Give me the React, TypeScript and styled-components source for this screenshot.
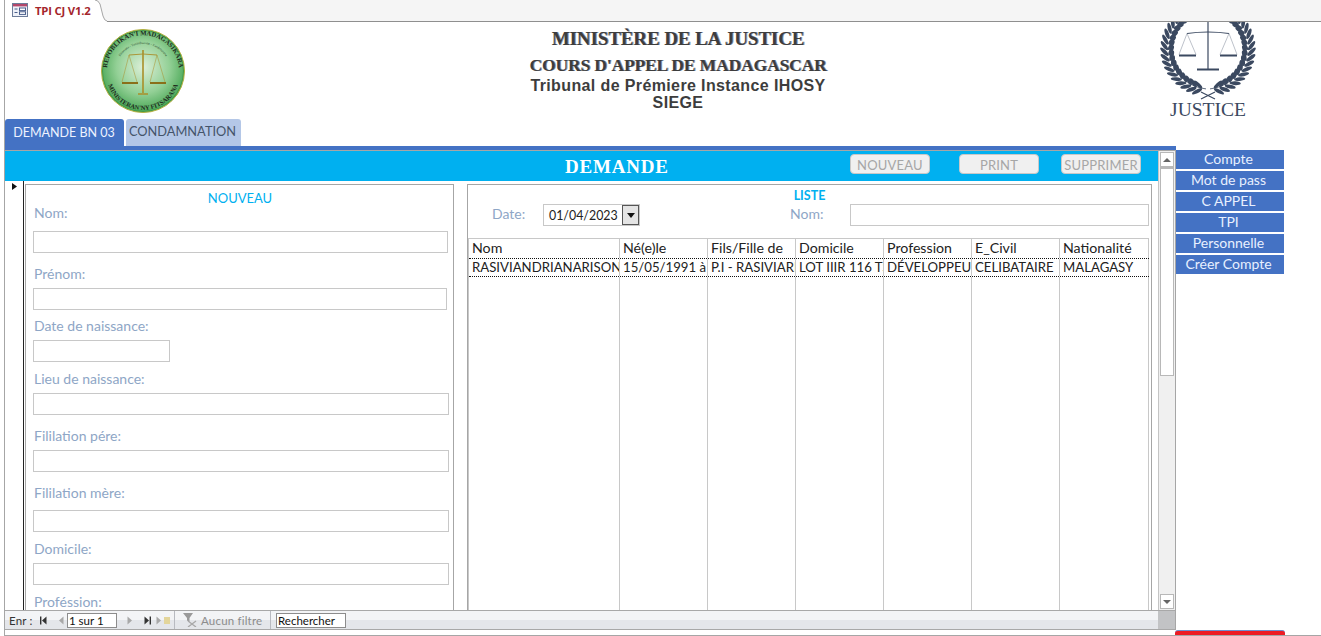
import React from "react";
import styled, { createGlobalStyle } from "styled-components";

const Global = createGlobalStyle`
  html, body { margin: 0; padding: 0; background: #fff; overflow: hidden; }
  * { box-sizing: border-box; }
`;

const UI = `"Lato", "Open Sans", "Liberation Sans", sans-serif`;

const Page = styled.div`
  width: 1321px; height: 636px; overflow: hidden; display: flex; flex-direction: column;
  padding-left: 4px; background: #fff; font-family: ${UI};
`;
const Inner = styled.div`
  flex: 1; display: flex; flex-direction: column; border-left: 1px solid #a6a6a6; min-height: 0;
`;
const DocBar = styled.div`
  height: 22px; flex: none; display: flex; background: #f5f5f5; border-bottom: 1px solid #8f8f8f;
`;
const DocTab = styled.div`
  width: 87px; height: 22px; flex: none; display: flex; align-items: center; gap: 7px; padding: 0 0 2px 7px;
  background: #fff; font: bold 11.3px "Open Sans", sans-serif; color: #a4262c; letter-spacing: -0.2px; white-space: nowrap;
`;
const TabTail = styled.svg`width: 15px; height: 22px; flex: none;`;

const Header = styled.header`
  height: 97px; flex: none; display: flex; overflow: hidden;
`;
const SealCell = styled.div`width: 453px; padding: 7px 0 0 96px; flex: none;`;
const TitleCell = styled.div`
  width: 440px; flex: none; text-align: center; color: #3d3d3d; padding-top: 5px;
`;
const Title1 = styled.div`
  font: bold 19px/24px "Liberation Serif", serif; letter-spacing: -0.1px;
  text-shadow: 1px 0 0 #8a8fa0;
`;
const Title2 = styled.div`
  font: bold 17.5px/24px "Liberation Serif", serif; letter-spacing: -0.15px; margin-top: 2px; margin-bottom: 0;
  text-shadow: 1px 0 0 #8a8fa0;
`;
const Title3 = styled.div`
  font: bold 16px/17px "Liberation Sans", sans-serif; letter-spacing: 0.38px;
`;
const WreathCell = styled.div`margin-left: 257px; width: 106px; flex: none;`;

const TabRow = styled.div`
  height: 27px; flex: none; display: flex; gap: 2px; align-items: stretch;
`;
const TabItem = styled.div<{ $active?: boolean; $w: number }>`
  width: ${(p) => p.$w}px; display: flex; align-items: center; justify-content: center;
  border-radius: 3px 3px 0 0; font-size: ${(p) => (p.$active ? 12.5 : 12.8)}px;
  padding-bottom: ${(p) => (p.$active ? 1 : 4)}px;
  padding-right: ${(p) => (p.$active ? 1 : 2)}px;
  background: ${(p) => (p.$active ? "#4472c4" : "#b4c7e7")};
  color: ${(p) => (p.$active ? "#eef3ff" : "#44546a")};
`;
const BlueLine = styled.div`height: 4px; width: 1171px; flex: none; background: #4472c4;`;

const Main = styled.div`flex: none; height: 480px; display: flex;`;
const FormWindow = styled.div`
  width: 1171px; flex: none; display: flex; flex-direction: column; border-right: 1px solid #a6a6a6;
`;
const ScrollRow = styled.div`flex: 1; display: flex; min-height: 0; border-top: 1px solid #a6a6a6;`;
const Content = styled.div`width: 1153px; flex: none; display: flex; flex-direction: column;`;
const Banner = styled.div`
  height: 30px; flex: none; background: #00b0f0; display: flex; align-items: center; padding-left: 560px;
`;
const BannerTitle = styled.div`
  width: 285px; font: bold 19px/30px "Liberation Serif", serif; color: #fff; letter-spacing: 0.8px; padding-top: 2px;
`;
const GhostButton = styled.div<{ $gap: number }>`
  width: 80px; height: 20px; margin-left: ${(p) => p.$gap}px; margin-top: -4px; padding-top: 1px;
  display: flex; align-items: center; justify-content: center;
  background: #f0f0f0; border: 1px solid #c8c8c8; border-radius: 4px;
  color: #a6a6a6; font-size: 13px; letter-spacing: 0.2px;
`;
const Body = styled.div`flex: 1; display: flex; min-height: 0;`;
const Selector = styled.div`
  width: 19px; flex: none; border-right: 1px solid #222; display: flex; justify-content: center; padding-top: 2px;
`;
const LeftPanel = styled.section`
  width: 429px; margin: 3px 0 0 1px; flex: none; overflow: hidden;
  border: 1px solid #a6a6a6; border-bottom: 0; padding: 6px 0 0 7px;
`;
const PanelTitle = styled.div`
  font-size: 13px; line-height: 14px; color: #00b0f0; text-align: center; padding-right: 6px;
`;
const FieldLabel = styled.div<{ $gap: number; $after: number }>`
  font-size: 14px; line-height: 16px; color: #8ea6c6; padding-left: 1px;
  margin-top: ${(p) => p.$gap}px; margin-bottom: ${(p) => p.$after}px;
`;
const Input = styled.div<{ $w: number }>`
  width: ${(p) => p.$w}px; height: 22px; flex: none; background: #fff; border: 1px solid #c8c8c8;
`;
const RightPanel = styled.section`
  width: 685px; margin: 3px 0 0 13px; flex: none; display: flex; flex-direction: column;
  border: 1px solid #a6a6a6; border-bottom: 0; padding-top: 5px; min-height: 0;
`;
const ListTitle = styled.div`
  font: bold 12.5px/12px ${UI}; color: #00b0f0; text-align: center;
`;
const Filters = styled.div`
  display: flex; align-items: center; height: 22px; margin-top: 2px; padding-left: 24px;
`;
const FilterLabel = styled.div<{ $w: number }>`
  width: ${(p) => p.$w}px; font-size: 14px; color: #8ea6c6; margin-top: -3px;
`;
const DateBox = styled.div`
  width: 97px; height: 22px; border: 1px solid #c8c8c8; display: flex; align-items: center;
  justify-content: space-between; padding: 0 0 0 5px; font-size: 12.4px; color: #222;
`;
const DropButton = styled.div`
  width: 17px; height: 20px; border: 1px solid #555; background: #e4e4e4;
  display: flex; align-items: center; justify-content: center;
  &::after { content: ""; border: 4px solid transparent; border-top: 5px solid #111; border-bottom: 0; }
`;
const FilterGap = styled.div`width: 150px; flex: none;`;
const Table = styled.div`
  flex: 1; margin: 12px 0 0 0; display: flex; flex-direction: column; min-height: 0; width: 681px;
  border-top: 1px solid #c8c8c8; border-left: 1px solid #c8c8c8;
`;
const Row = styled.div<{ $fill?: boolean; $current?: boolean }>`
  display: grid; grid-template-columns: 151px repeat(5, 88px) 89px;
  height: ${(p) => (p.$fill ? "auto" : "19px")}; flex: ${(p) => (p.$fill ? 1 : "none")};
  border-top: ${(p) => (p.$current ? "1px dotted #111" : "0")};
  border-bottom: ${(p) => (p.$current ? "1px dotted #111" : "0")};
`;
const Cell = styled.div<{ $head?: boolean }>`
  border-right: 1px solid #c8c8c8; padding-left: 3px; font-size: ${(p) => (p.$head ? 14.2 : 13.2)}px;
  line-height: ${(p) => (p.$head ? 18 : 16)}px; color: #222;
  white-space: nowrap; overflow: hidden;
`;
const Scrollbar = styled.div`
  width: 17px; flex: none; background: #f0f0f0; border-left: 1px solid #c4c4c4; display: flex; flex-direction: column;
  padding: 1px 1px; 
`;
const ScrollButton = styled.div<{ $down?: boolean }>`
  height: 15px; flex: none; background: #fff; border: 1px solid #b8b8b8; display: flex; align-items: center; justify-content: center;
  &::after {
    content: ""; border: 4px solid transparent;
    ${(p) => (p.$down ? "border-top: 4px solid #666; border-bottom: 0;" : "border-bottom: 4px solid #666; border-top: 0;")}
  }
`;
const ScrollThumb = styled.div`height: 209px; flex: none; background: #fff; border: 1px solid #b8b8b8; border-top: 2px solid #b8b8b8;`;
const ScrollTrack = styled.div`flex: 1;`;

const NavRow = styled.div`height: 20px; flex: none; display: flex; border-top: 1px solid #a8a8a8; border-bottom: 1px solid #a8a8a8;`;
const Nav = styled.div`
  width: 1153px; flex: none; display: flex; align-items: center; padding-left: 4px;
  background: linear-gradient(#f3f4f6 50%, #e4e6ea 50%); font-size: 11.5px; color: #333;
`;
const Corner = styled.div`flex: 1; background: #c2c3c5;`;
const NavText = styled.span<{ $w: number }>`width: ${(p) => p.$w}px; flex: none; white-space: nowrap; letter-spacing: 0.2px;`;
const NavIcon = styled.svg<{ $ml: number }>`flex: none; width: 8px; height: 9px; margin-left: ${(p) => p.$ml}px;`;
const NavInput = styled.div<{ $w: number; $ml: number }>`
  width: ${(p) => p.$w}px; margin-left: ${(p) => p.$ml}px; height: 15px; flex: none; background: #fff; border: 1px solid #8c8c8c;
  font-size: 11.5px; line-height: 13px; padding-left: 1px; color: #111;
`;
const NavSep = styled.div<{ $ml: number }>`width: 1px; height: 18px; flex: none; background: #b8bac0; margin-left: ${(p) => p.$ml}px;`;
const FilterIcon = styled.svg`width: 15px; height: 14px; margin-left: 8px; flex: none;`;
const FilterText = styled.span`color: #8c8c8c; margin-left: 3px; width: 69px; flex: none; letter-spacing: 0.2px; white-space: nowrap;`;

const Sidebar = styled.nav`width: 108px; flex: none; display: flex; flex-direction: column; gap: 2px;`;
const SideButton = styled.div`
  height: 19px; background: #4472c4; color: #e8f0ff; font-size: 14px; line-height: 18px; text-align: center; padding-right: 3px;
`;
const Footer = styled.div`
  flex: 1; display: flex; border-bottom: 1px solid #a6a6a6; padding-left: 1170px;
`;
const RedButton = styled.div`
  width: 110px; height: 5px; background: #ed1c24; border-top: 1px solid #6f8fd0; border-radius: 3px 3px 0 0;
`;

const fields = [
  { label: "Nom:", gap: 0, after: 10, w: 415 },
  { label: "Prénom:", gap: 13, after: 6, w: 414 },
  { label: "Date de naissance:", gap: 8, after: 6, w: 137 },
  { label: "Lieu de naissance:", gap: 9, after: 6, w: 416 },
  { label: "Fililation pére:", gap: 13, after: 6, w: 416 },
  { label: "Fililation mère:", gap: 13, after: 9, w: 416 },
  { label: "Domicile:", gap: 9, after: 6, w: 416 },
  { label: "Proféssion:", gap: 9, after: 6, w: 416 },
];
const heads = ["Nom", "Né(e)le", "Fils/Fille de", "Domicile", "Profession", "E_Civil", "Nationalité"];
const record = ["RASIVIANDRIANARISON", "15/05/1991 à Ihosy", "P.I - RASIVIARISOA", "LOT IIIR 116 TSIANALOKA", "DÉVELOPPEUR", "CELIBATAIRE", "MALAGASY"];

const FormIcon = () => (
  <svg width="16" height="14" viewBox="0 0 16 14">
    <rect x="0.5" y="0.5" width="15" height="13" fill="#eef1f8" stroke="#6d7c99" />
    <rect x="1" y="1" width="14" height="2.4" fill="#b3476a" />
    <path d="M2.5 6h3M2.5 9.5h3" stroke="#4a5f8c" />
    <rect x="7.5" y="5" width="6" height="2.6" fill="#fff" stroke="#4a5f8c" />
    <rect x="7.5" y="8.8" width="6" height="2.6" fill="#fff" stroke="#4a5f8c" />
  </svg>
);

const Seal = () => (
  <svg width="84" height="84" viewBox="0 0 84 84">
    <defs>
      <radialGradient id="g" cx="50%" cy="45%" r="55%">
        <stop offset="0%" stopColor="#dcefd8" />
        <stop offset="60%" stopColor="#93d096" />
        <stop offset="100%" stopColor="#4ca858" />
      </radialGradient>
      <path id="arcTop" d="M8 54 A36 36 0 1 1 76 54" />
      <path id="arcIn" d="M15 42 A27 27 0 0 1 69 42" />
      <path id="arcBot" d="M5.5 50 A37 37 0 0 0 78.5 50" />
    </defs>
    <circle cx="42" cy="42" r="41.5" fill="#3f9a4c" stroke="#b5b040" strokeWidth="1" />
    <circle cx="42" cy="42" r="40" fill="url(#g)" />
    <text fontFamily="Liberation Serif, serif" fontSize="6.6" fontWeight="bold" fill="#1d2a1c">
      <textPath href="#arcTop" startOffset="50%" textAnchor="middle">REPOBLIKAN'I MADAGASIKARA</textPath>
    </text>
    <text fontFamily="Liberation Serif, serif" fontSize="3.4" fill="#2c4a2c">
      <textPath href="#arcIn" startOffset="50%" textAnchor="middle">Fitiavana - Tanindrazana - Fandrosoana</textPath>
    </text>
    <text fontFamily="Liberation Serif, serif" fontSize="6.4" fontWeight="bold" fill="#1d2a1c">
      <textPath href="#arcBot" startOffset="50%" textAnchor="middle">MINISTERAN'NY FITSARANA</textPath>
    </text>
    <g stroke="#a98f2a" fill="none">
      <path d="M42 21v43M37 65h10" strokeWidth="1.6" />
      <path d="M28 26q14-2 28 0" strokeWidth="0.9" />
      <path d="M28 26l-7 27M28 26l8 27M56 26l-7 27M56 26l8 27" strokeWidth="0.5" />
      <path d="M21 54h16M49 54h16" strokeWidth="1.8" stroke="#8a6f1a" />
    </g>
  </svg>
);

const rad = Math.PI / 180;
const leaves = Array.from({ length: 19 }, (_, i) => {
  const deg = -62 + i * 8;
  const a = deg * rad;
  const px = Math.cos(a) * 40;
  const py = 27 + Math.sin(a) * 40;
  const outer = (deg - 55) * rad;
  const inner = (deg - 125) * rad;
  return {
    i,
    ox: px + Math.cos(outer) * 6, oy: py + Math.sin(outer) * 6, or: deg - 55,
    ix: px + Math.cos(inner) * 6, iy: py + Math.sin(inner) * 6, ir: deg - 125,
  };
});

const Wreath = () => (
  <svg width="106" height="97" viewBox="0 0 106 97">
    <g fill="#3b4960">
      {[1, -1].map((side) => (
        <g key={side} transform={`translate(53 0) scale(${side} 1)`}>
          <path d="M18.8 -7 A40 40 0 0 1 2 66.9" fill="none" stroke="#3b4960" strokeWidth="0.8" />
          {leaves.map((l) => (
            <g key={l.i}>
              <ellipse cx={l.ox} cy={l.oy} rx="5.6" ry="1.9" transform={`rotate(${l.or} ${l.ox} ${l.oy})`} />
              <ellipse cx={l.ix} cy={l.iy} rx="5.4" ry="1.8" transform={`rotate(${l.ir} ${l.ix} ${l.iy})`} />
            </g>
          ))}
        </g>
      ))}
    </g>
    <g stroke="#3b4960" fill="none">
      <path d="M53 0v47" strokeWidth="1.2" />
      <path d="M42 47.5h22" strokeWidth="2" />
      <path d="M32 11.5q21-3 42 0" strokeWidth="1.2" />
      <path d="M32 11.5l-8 21M32 11.5l9 21M74 11.5l-9 21M74 11.5l8 21" strokeWidth="0.5" stroke="#7a8494" />
      <path d="M24 33.5h17M65 33.5h17" strokeWidth="2" />
      <path d="M46 70l14 7M60 70l-14 7" strokeWidth="1.2" />
    </g>
    <text x="53" y="93.5" textAnchor="middle" fontFamily="Liberation Serif, serif" fontSize="19.5" fill="#3b4960">JUSTICE</text>
  </svg>
);

const Tri = ({ d, ml, c = "#333", bar }: { d: "l" | "r"; ml: number; c?: string; bar?: boolean }) => (
  <NavIcon $ml={ml} viewBox="0 0 8 9">
    {d === "l" ? <path d="M6.5 0.5v8L2 4.5z" fill={c} /> : <path d="M1.5 0.5v8L6 4.5z" fill={c} />}
    {bar && (d === "l" ? <rect x="0" y="0.5" width="1.4" height="8" fill={c} /> : <rect x="6.6" y="0.5" width="1.4" height="8" fill={c} />)}
  </NavIcon>
);

export default function App() {
  return (
    <Page>
      <Global />
      <Inner>
        <DocBar>
          <DocTab><FormIcon />TPI CJ V1.2</DocTab>
          <TabTail viewBox="0 0 15 22">
            <path d="M0 0h3q3 0 5 4l3 12q1.500 5 4 5v1H0z" fill="#fff" />
            <path d="M3 0q3 0 5 4l3 12q1.500 5 4 5" fill="none" stroke="#a6a6a6" />
          </TabTail>
        </DocBar>
        <Header>
          <SealCell><Seal /></SealCell>
          <TitleCell>
            <Title1>MINISTÈRE DE LA JUSTICE</Title1>
            <Title2>COURS D'APPEL DE MADAGASCAR</Title2>
            <Title3>Tribunal de Prémiere Instance IHOSY</Title3>
            <Title3>SIEGE</Title3>
          </TitleCell>
          <WreathCell><Wreath /></WreathCell>
        </Header>
        <TabRow>
          <TabItem $active $w={119}>DEMANDE BN 03</TabItem>
          <TabItem $w={115}>CONDAMNATION</TabItem>
        </TabRow>
        <BlueLine />
        <Main>
          <FormWindow>
            <ScrollRow>
              <Content>
                <Banner>
                  <BannerTitle>DEMANDE</BannerTitle>
                  <GhostButton $gap={0}>NOUVEAU</GhostButton>
                  <GhostButton $gap={29}>PRINT</GhostButton>
                  <GhostButton $gap={22}>SUPPRIMER</GhostButton>
                </Banner>
                <Body>
                  <Selector>
                    <svg width="5" height="7" viewBox="0 0 5 7"><path d="M0 0l5 3.5L0 7z" fill="#111" /></svg>
                  </Selector>
                  <LeftPanel>
                    <PanelTitle>NOUVEAU</PanelTitle>
                    {fields.map((f) => (
                      <React.Fragment key={f.label}>
                        <FieldLabel $gap={f.gap} $after={f.after}>{f.label}</FieldLabel>
                        <Input $w={f.w} />
                      </React.Fragment>
                    ))}
                  </LeftPanel>
                  <RightPanel>
                    <ListTitle>LISTE</ListTitle>
                    <Filters>
                      <FilterLabel $w={51}>Date:</FilterLabel>
                      <DateBox>01/04/2023<DropButton /></DateBox>
                      <FilterGap />
                      <FilterLabel $w={60}>Nom:</FilterLabel>
                      <Input $w={299} />
                    </Filters>
                    <Table>
                      <Row>{heads.map((h) => <Cell $head key={h}>{h}</Cell>)}</Row>
                      <Row $current>{record.map((r) => <Cell key={r}>{r}</Cell>)}</Row>
                      <Row $fill>{heads.map((h) => <Cell key={h} />)}</Row>
                    </Table>
                  </RightPanel>
                </Body>
              </Content>
              <Scrollbar>
                <ScrollButton />
                <ScrollThumb />
                <ScrollTrack />
                <ScrollButton $down />
              </Scrollbar>
            </ScrollRow>
            <NavRow>
              <Nav>
                <NavText $w={31}>Enr :</NavText>
                <Tri d="l" ml={0} bar />
                <Tri d="l" ml={9} c="#a8a8a8" />
                <NavInput $w={50} $ml={2}>1 sur 1</NavInput>
                <Tri d="r" ml={9} c="#a8a8a8" />
                <Tri d="r" ml={9} bar />
                <Tri d="r" ml={4} c="#a8a8a8" />
                <NavIcon $ml={0} viewBox="0 0 8 9"><path d="M1 1h6v7H1z" fill="#e3d59a" /></NavIcon>
                <NavSep $ml={3} />
                <FilterIcon viewBox="0 0 15 14">
                  <path d="M0 0h10L6.500 5v4L4 7.500V5z" fill="#9a9a9a" />
                  <path d="M5 8l8 6M13 8l-8 6" stroke="#a8a8a8" strokeWidth="1.3" />
                </FilterIcon>
                <FilterText>Aucun filtre</FilterText>
                <NavSep $ml={0} />
                <NavInput $w={70} $ml={5}>Rechercher</NavInput>
              </Nav>
              <Corner />
            </NavRow>
          </FormWindow>
          <Sidebar>
            <SideButton>Compte</SideButton>
            <SideButton>Mot de pass</SideButton>
            <SideButton>C APPEL</SideButton>
            <SideButton>TPI</SideButton>
            <SideButton>Personnelle</SideButton>
            <SideButton>Créer Compte</SideButton>
          </Sidebar>
        </Main>
        <Footer><RedButton /></Footer>
      </Inner>
    </Page>
  );
}
